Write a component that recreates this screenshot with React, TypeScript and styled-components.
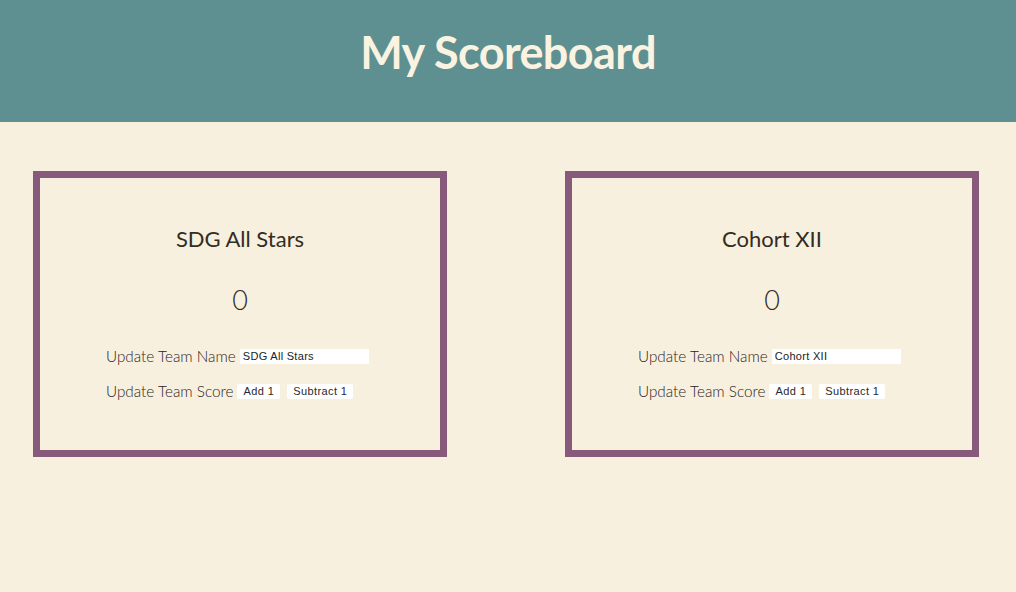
import React, { useState } from 'react';
import styled, { createGlobalStyle } from 'styled-components';

const GlobalStyle = createGlobalStyle`
  html, body {
    margin: 0;
    padding: 0;
    background: #f8f0df;
  }
  body {
    font-family: Lato, "Noto Sans", sans-serif;
    color: #3a3328;
  }
`;

const Page = styled.div`
  min-height: 592px;
  background: #f8f0df;
`;

const Header = styled.header`
  height: 122px;
  background: #5f9091;
  box-sizing: border-box;
  padding-top: 24px;
  text-align: center;
`;

const Title = styled.h1`
  margin: 0;
  font-family: Lato, "Noto Sans", sans-serif;
  font-size: 45px;
  line-height: 56px;
  font-weight: 700;
  letter-spacing: -0.6px;
  color: #fbf3e1;
`;

const Board = styled.main`
  display: flex;
  justify-content: space-between;
  padding: 49px 37px 0 33px;
`;

const Card = styled.section`
  box-sizing: border-box;
  width: 414px;
  height: 286px;
  border: 7px solid #875a7b;
  display: flex;
  flex-direction: column;
  align-items: center;
  padding-top: 47px;
`;

const TeamName = styled.h2`
  margin: 0;
  font-size: 22px;
  line-height: 28px;
  font-weight: 400;
  color: #332c22;
`;

const Score = styled.div`
  margin-top: 30px;
  font-size: 27px;
  line-height: 34px;
  font-weight: 300;
  color: #332c22;
`;

const Controls = styled.div`
  margin-top: 28px;
  display: flex;
  flex-direction: column;
  gap: 13px;
  align-self: flex-start;
  margin-left: 66px;
`;

const Row = styled.div`
  display: flex;
  align-items: center;
  gap: 4px;
  height: 22px;
`;

const Label = styled.label`
  font-size: 15.3px;
  font-weight: 300;
  color: #2a241b;
`;

const NameInput = styled.input`
  box-sizing: border-box;
  width: 129px;
  height: 15px;
  border: none;
  outline: none;
  background: #fff;
  padding: 0 3px;
  font-family: "Liberation Sans", Arial, sans-serif;
  font-size: 11px;
  letter-spacing: 0.3px;
  color: #222;
`;

const Button = styled.button`
  box-sizing: border-box;
  height: 15px;
  border: none;
  border-radius: 2px;
  background: #fff;
  padding: 0 6px;
  margin-right: 3px;
  font-family: "Liberation Sans", Arial, sans-serif;
  font-size: 11px;
  letter-spacing: 0.4px;
  color: #2a2a2a;
  cursor: pointer;
`;

interface TeamProps {
  initialName: string;
}

const Team: React.FC<TeamProps> = ({ initialName }) => {
  const [name, setName] = useState(initialName);
  const [score, setScore] = useState(0);

  return (
    <Card>
      <TeamName>{name}</TeamName>
      <Score>{score}</Score>
      <Controls>
        <Row>
          <Label>Update Team Name</Label>
          <NameInput value={name} onChange={(e) => setName(e.target.value)} />
        </Row>
        <Row>
          <Label>Update Team Score</Label>
          <Button onClick={() => setScore(score + 1)}>Add 1</Button>
          <Button onClick={() => setScore(score - 1)}>Subtract 1</Button>
        </Row>
      </Controls>
    </Card>
  );
};

const App: React.FC = () => (
  <Page>
    <GlobalStyle />
    <Header>
      <Title>My Scoreboard</Title>
    </Header>
    <Board>
      <Team initialName="SDG All Stars" />
      <Team initialName="Cohort XII" />
    </Board>
  </Page>
);

export default App;
